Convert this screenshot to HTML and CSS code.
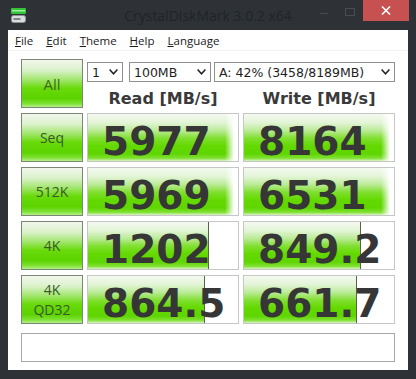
FILE: index.html
```html
<!DOCTYPE html>
<html lang="en">
<head>
    <meta charset="UTF-8">
    <title>CrystalDiskMark 3.0.2 x64</title>
    <link rel="stylesheet" href="styles.css">
</head>
<body>
    <div class="window">
        <div class="titlebar">
            <div class="app-icon">
                <svg width="17" height="17" viewBox="0 0 17 17">
                    <rect x="1" y="1" width="15" height="6" rx="1" fill="#33c43a"/>
                    <rect x="2" y="3" width="13" height="1.5" fill="#9ef09a"/>
                    <rect x="1.5" y="8.5" width="14" height="7" rx="2" fill="#d9dcdc" stroke="#8d9294"/>
                    <rect x="3.5" y="11" width="7" height="2" fill="#7f8486"/>
                </svg>
            </div>
            <div class="title">CrystalDiskMark 3.0.2 x64</div>
            <div class="caption">
                <span class="cap-min"><i></i></span>
                <span class="cap-max"><i></i></span>
                <span class="cap-close">
                    <svg width="10" height="9" viewBox="0 0 10 9">
                        <path d="M1 0.5 L9 8.5 M9 0.5 L1 8.5" stroke="#fff" stroke-width="1.6"/>
                    </svg>
                </span>
            </div>
        </div>

        <div class="client">
            <div class="menubar">
                <span><u>F</u>ile</span>
                <span><u>E</u>dit</span>
                <span><u>T</u>heme</span>
                <span><u>H</u>elp</span>
                <span><u>L</u>anguage</span>
            </div>

            <div class="main">
                <div class="grid">
                    <div class="btn btn-all">All</div>
                    <div class="controls">
                        <div class="selects">
                            <div class="select s-count">1 <svg class="chev" width="9" height="6" viewBox="0 0 9 6"><path d="M0.6 0.6 L4.5 4.8 L8.4 0.6" fill="none" stroke="#202020" stroke-width="1.5"/></svg></div>
                            <div class="select s-size">100MB <svg class="chev" width="9" height="6" viewBox="0 0 9 6"><path d="M0.6 0.6 L4.5 4.8 L8.4 0.6" fill="none" stroke="#202020" stroke-width="1.5"/></svg></div>
                            <div class="select s-drive">A: 42% (3458/8189MB) <svg class="chev" width="9" height="6" viewBox="0 0 9 6"><path d="M0.6 0.6 L4.5 4.8 L8.4 0.6" fill="none" stroke="#202020" stroke-width="1.5"/></svg></div>
                        </div>
                        <div class="heads">
                            <div>Read [MB/s]</div>
                            <div>Write [MB/s]</div>
                        </div>
                    </div>

                    <div class="btn">Seq</div>
                    <div class="val"><div class="bar full"></div><span class="num">5977</span></div>
                    <div class="val"><div class="bar full"></div><span class="num">8164</span></div>

                    <div class="btn">512K</div>
                    <div class="val"><div class="bar full"></div><span class="num">5969</span></div>
                    <div class="val"><div class="bar full"></div><span class="num">6531</span></div>

                    <div class="btn">4K</div>
                    <div class="val"><div class="bar part" style="width:121px"></div><span class="num">1202</span></div>
                    <div class="val"><div class="bar part" style="width:117px"></div><span class="num">849.2</span></div>

                    <div class="btn">4K<br>QD32</div>
                    <div class="val"><div class="bar part" style="width:117px"></div><span class="num">864.5</span></div>
                    <div class="val"><div class="bar part" style="width:113px"></div><span class="num">661.7</span></div>
                </div>

                <div class="status"></div>
            </div>
        </div>
    </div>
</body>
</html>
```

FILE: styles.css
```css
body {
    margin: 0;
    background-color: #2e3236;
    font-family: "Open Sans", "Noto Sans", sans-serif;
}

.window {
    width: 416px;
    height: 379px;
    display: flex;
    flex-direction: column;
}

/* title bar */

.titlebar {
    height: 30px;
    display: grid;
    grid-template-columns: 1fr auto 1fr;
    align-items: center;
}

.app-icon {
    padding-left: 10px;
    height: 17px;
}

.title {
    font-size: 14px;
    color: #202427;
}

.caption {
    justify-self: end;
    align-self: start;
    display: flex;
    padding-right: 7px;
}

.cap-min,
.cap-max {
    width: 26px;
    height: 21px;
    display: flex;
    justify-content: center;
}

.cap-min i {
    width: 8px;
    height: 1px;
    margin-top: 13px;
    background-color: #474c50;
}

.cap-max i {
    width: 8px;
    height: 6px;
    margin-top: 8px;
    border: 1px solid #474c50;
}

.cap-close {
    width: 46px;
    height: 21px;
    background-color: #c75050;
    display: flex;
    align-items: center;
    justify-content: center;
}

/* client area */

.client {
    margin: 0 8px;
    height: 340px;
    background-color: #fff;
    display: flex;
    flex-direction: column;
}

.menubar {
    height: 21px;
    box-sizing: border-box;
    display: flex;
    align-items: center;
    gap: 13px;
    padding-left: 7px;
    font-size: 11.5px;
    color: #1b1b1b;
    border-bottom: 1px solid #f0f0f0;
}

.main {
    padding: 8px 13px;
}

.grid {
    display: grid;
    grid-template-columns: 62px 152px 152px;
    grid-auto-rows: 49px;
    gap: 5px 4px;
}

.btn {
    box-sizing: border-box;
    border: 1px solid #7a8772;
    background: linear-gradient(to bottom, #f2f7ed 0%, #daf1c9 22%, #a2e66e 42%, #69da0a 60%, #5bd300 82%, #7fe236 93%, #b6ef8c 100%);
    display: flex;
    align-items: center;
    justify-content: center;
    text-align: center;
    font-size: 14px;
    line-height: 20px;
    color: #3a5828;
}

.btn-all {
    font-size: 15px;
    color: #3d6b19;
}

.controls {
    grid-column: span 2;
    padding-top: 3px;
}

.selects {
    display: flex;
    height: 20px;
}

.select {
    box-sizing: border-box;
    height: 20px;
    border: 1px solid #8f8f8f;
    padding: 0 4px;
    display: flex;
    align-items: center;
    justify-content: space-between;
    font-family: "DejaVu Sans", sans-serif;
    font-size: 12.5px;
    color: #1e1e1e;
}

.s-count {
    width: 36px;
    margin-right: 6px;
}

.s-size {
    width: 82px;
    margin-right: 3px;
}

.s-drive {
    flex: 1;
}

.heads {
    display: grid;
    grid-template-columns: 152px 152px;
    gap: 4px;
    padding-top: 6px;
    text-align: center;
    font: bold 16px/21px "DejaVu Sans", sans-serif;
    color: #3a3a3a;
}

/* result boxes */

.val {
    position: relative;
    box-sizing: border-box;
    border: 1px solid #c6c6c6;
    padding: 7px 0 0 14px;
    font: bold 39px/41px "DejaVu Sans", sans-serif;
    color: #363636;
    white-space: nowrap;
}

.bar {
    position: absolute;
    left: 0;
    top: 0;
    bottom: 0;
    box-sizing: border-box;
    background: linear-gradient(to bottom, #f4f9f0 0%, #e3f4d7 18%, #bbeb97 35%, #7fdf2e 52%, #63d900 68%, #5fd600 85%, #7fe032 94%, #d8f4c3 100%);
}

.bar.full {
    width: 146px;
    -webkit-mask-image: linear-gradient(to right, #000 calc(100% - 9px), transparent);
    mask-image: linear-gradient(to right, #000 calc(100% - 9px), transparent);
}

.bar.part {
    border-right: 1px solid #56644c;
}

.num {
    position: relative;
}

.status {
    margin-top: 9px;
    height: 29px;
    box-sizing: border-box;
    border: 1px solid #a8a8a8;
}
```
